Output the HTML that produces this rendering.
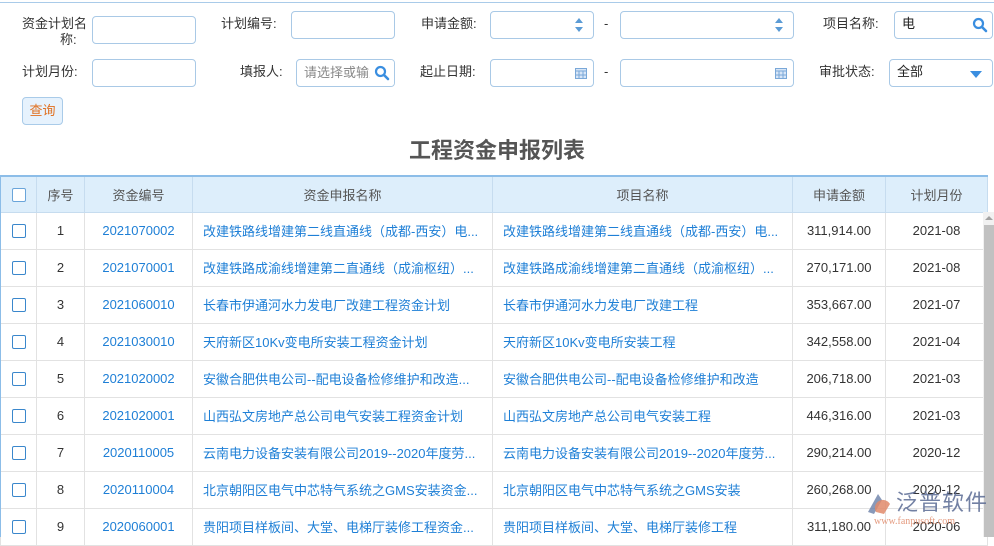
<!DOCTYPE html>
<html><head><meta charset="utf-8">
<style>
*{box-sizing:border-box;margin:0;padding:0}
body{width:994px;height:537px;overflow:hidden;background:#fff;font-family:"Liberation Sans","Noto Sans CJK SC",sans-serif;font-size:13px;color:#333;position:relative}
.a{position:absolute}
.lbl{position:absolute;font-size:13px;color:#333;line-height:16px;white-space:nowrap}
.in{position:absolute;border:1px solid #a9c9e6;border-radius:4px;background:#fff;height:28px}
.in span{line-height:16px}
.sp{position:absolute;right:10px;width:0;height:0;border-left:4px solid transparent;border-right:4px solid transparent}
table{position:absolute;left:0;top:175px;border-collapse:collapse;table-layout:fixed;width:987px}
td,th{height:37px;border:1px solid #e2e2e2;text-align:center;white-space:nowrap;overflow:hidden;font-size:13px}
th{height:36px;background:#ddeefb;color:#555;font-weight:normal;border-color:#c6dcef;border-top:2px solid #8cbde8}
td.l{text-align:left;padding-left:10px;color:#1e7fd6;text-overflow:ellipsis}
td.b{color:#1e7fd6}
.cb{display:inline-block;width:14px;height:14px;border:1px solid #3a87cc;border-radius:2px;vertical-align:middle;background:#fff}
</style></head><body>
<div class="a" style="left:0;top:2px;width:994px;height:1px;background:#a9cbe9"></div>

<div class="lbl" style="left:22px;top:16px">资金计划名</div>
<div class="lbl" style="left:60px;top:32px">称:</div>
<div class="in" style="left:92px;top:16px;width:104px"></div>
<div class="lbl" style="left:221px;top:16px">计划编号:</div>
<div class="in" style="left:291px;top:11px;width:104px"></div>
<div class="lbl" style="left:421px;top:16px">申请金额:</div>
<div class="in" style="left:490px;top:11px;width:104px"><div class="sp" style="top:6px;border-bottom:5px solid #5b9bd5"></div><div class="sp" style="top:15px;border-top:5px solid #5b9bd5"></div></div>
<div class="lbl" style="left:604px;top:16px">-</div>
<div class="in" style="left:620px;top:11px;width:174px"><div class="sp" style="top:6px;border-bottom:5px solid #5b9bd5"></div><div class="sp" style="top:15px;border-top:5px solid #5b9bd5"></div></div>
<div class="lbl" style="left:823px;top:16px">项目名称:</div>
<div class="in" style="left:894px;top:11px;width:99px"><span class="a" style="left:7px;top:4px;color:#222">电</span>
<svg class="a" style="right:4px;top:5px" width="16" height="16" viewBox="0 0 16 16"><circle cx="6.5" cy="6.5" r="4.5" fill="none" stroke="#3a8ee0" stroke-width="2.2"/><path d="M10 10l4 4" stroke="#3a8ee0" stroke-width="2.6" stroke-linecap="round"/></svg></div>

<div class="lbl" style="left:22px;top:64px">计划月份:</div>
<div class="in" style="left:92px;top:59px;width:104px"></div>
<div class="lbl" style="left:240px;top:64px">填报人:</div>
<div class="in" style="left:296px;top:59px;width:99px;overflow:hidden"><span class="a" style="left:7px;top:5px;color:#888;white-space:nowrap">请选择或输入</span><div class="a" style="right:0;top:0;width:24px;height:26px;background:#fff"></div>
<svg class="a" style="right:4px;top:5px" width="16" height="16" viewBox="0 0 16 16"><circle cx="6.5" cy="6.5" r="4.5" fill="none" stroke="#3a8ee0" stroke-width="2.2"/><path d="M10 10l4 4" stroke="#3a8ee0" stroke-width="2.6" stroke-linecap="round"/></svg></div>
<div class="lbl" style="left:420px;top:64px">起止日期:</div>
<div class="in" style="left:490px;top:59px;width:104px"><svg class="a" style="right:6px;top:7px" width="12" height="12"><rect x="0.5" y="1.5" width="11" height="10" fill="#d8e6f7" stroke="#7aa8d8"/><path d="M0 4h12M4 4v8M8 4v8M0 8h12" stroke="#7aa8d8" stroke-width="1"/></svg></div>
<div class="lbl" style="left:604px;top:64px">-</div>
<div class="in" style="left:620px;top:59px;width:174px"><svg class="a" style="right:6px;top:7px" width="12" height="12"><rect x="0.5" y="1.5" width="11" height="10" fill="#d8e6f7" stroke="#7aa8d8"/><path d="M0 4h12M4 4v8M8 4v8M0 8h12" stroke="#7aa8d8" stroke-width="1"/></svg></div>
<div class="lbl" style="left:819px;top:64px">审批状态:</div>
<div class="in" style="left:889px;top:59px;width:104px"><span class="a" style="left:7px;top:4px;color:#222">全部</span><div class="sp" style="top:11px;border-left-width:6px;border-right-width:6px;border-top:7px solid #3a8ee0"></div></div>

<div class="a" style="left:22px;top:97px;width:41px;height:28px;border:1px solid #a9cbe9;border-radius:4px;background:#e6f2fd;color:#e07020;text-align:center;line-height:26px">查询</div>

<div class="a" style="left:0;top:137px;width:994px;text-align:center;font-size:22px;font-weight:bold;color:#555;line-height:28px">工程资金申报列表</div>

<table>
<colgroup><col style="width:36px"><col style="width:48px"><col style="width:108px"><col style="width:300px"><col style="width:300px"><col style="width:93px"><col style="width:102px"></colgroup>
<tr><th><span class="cb" style="border-color:#6aa5da"></span></th><th>序号</th><th>资金编号</th><th>资金申报名称</th><th>项目名称</th><th>申请金额</th><th>计划月份</th></tr>
<tr><td><span class="cb"></span></td><td>1</td><td class="b">2021070002</td><td class="l">改建铁路线增建第二线直通线（成都-西安）电...</td><td class="l">改建铁路线增建第二线直通线（成都-西安）电...</td><td>311,914.00</td><td>2021-08</td></tr>
<tr><td><span class="cb"></span></td><td>2</td><td class="b">2021070001</td><td class="l">改建铁路成渝线增建第二直通线（成渝枢纽）...</td><td class="l">改建铁路成渝线增建第二直通线（成渝枢纽）...</td><td>270,171.00</td><td>2021-08</td></tr>
<tr><td><span class="cb"></span></td><td>3</td><td class="b">2021060010</td><td class="l">长春市伊通河水力发电厂改建工程资金计划</td><td class="l">长春市伊通河水力发电厂改建工程</td><td>353,667.00</td><td>2021-07</td></tr>
<tr><td><span class="cb"></span></td><td>4</td><td class="b">2021030010</td><td class="l">天府新区10Kv变电所安装工程资金计划</td><td class="l">天府新区10Kv变电所安装工程</td><td>342,558.00</td><td>2021-04</td></tr>
<tr><td><span class="cb"></span></td><td>5</td><td class="b">2021020002</td><td class="l">安徽合肥供电公司--配电设备检修维护和改造...</td><td class="l">安徽合肥供电公司--配电设备检修维护和改造</td><td>206,718.00</td><td>2021-03</td></tr>
<tr><td><span class="cb"></span></td><td>6</td><td class="b">2021020001</td><td class="l">山西弘文房地产总公司电气安装工程资金计划</td><td class="l">山西弘文房地产总公司电气安装工程</td><td>446,316.00</td><td>2021-03</td></tr>
<tr><td><span class="cb"></span></td><td>7</td><td class="b">2020110005</td><td class="l">云南电力设备安装有限公司2019--2020年度劳...</td><td class="l">云南电力设备安装有限公司2019--2020年度劳...</td><td>290,214.00</td><td>2020-12</td></tr>
<tr><td><span class="cb"></span></td><td>8</td><td class="b">2020110004</td><td class="l">北京朝阳区电气中芯特气系统之GMS安装资金...</td><td class="l">北京朝阳区电气中芯特气系统之GMS安装</td><td>260,268.00</td><td>2020-12</td></tr>
<tr><td><span class="cb"></span></td><td>9</td><td class="b">2020060001</td><td class="l">贵阳项目样板间、大堂、电梯厅装修工程资金...</td><td class="l">贵阳项目样板间、大堂、电梯厅装修工程</td><td>311,180.00</td><td>2020-06</td></tr>
</table>
<div class="a" style="left:0;top:175px;width:1px;height:362px;background:#8cbde8"></div>

<div class="a" style="left:983px;top:212px;width:11px;height:325px;background:#f1f1f1"></div>
<div class="a" style="left:985px;top:216px;width:0;height:0;border-left:4px solid transparent;border-right:4px solid transparent;border-bottom:4px solid #a3a3a3"></div>
<div class="a" style="left:984px;top:225px;width:10px;height:312px;background:#c1c1c1"></div>

<svg class="a" style="left:864px;top:490px" width="30" height="30" viewBox="0 0 30 30"><path d="M4 22 L14 4 L18 10 L10 24Z" fill="#6a7fa8" opacity="0.8"/><path d="M12 22 A8 8 0 0 1 26 14 L20 24Z" fill="#e08a6a" opacity="0.85"/></svg>
<div class="a" style="left:896px;top:489px;font-size:22px;color:#5a6b94;opacity:0.85;letter-spacing:1px;line-height:28px">泛普软件</div>
<div class="a" style="left:874px;top:516px;font-size:10px;color:#e08a6a;font-family:'Liberation Serif',serif;opacity:0.85">www.fanpusoft.com</div>
</body></html>
